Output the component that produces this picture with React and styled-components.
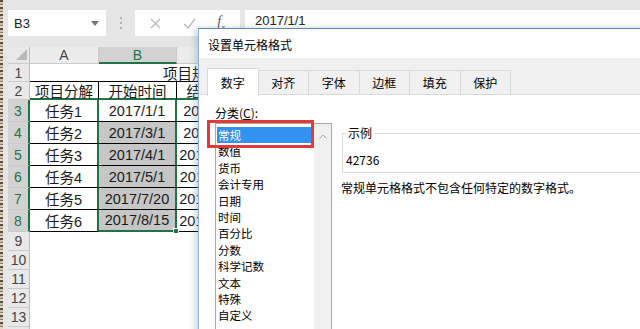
import React from 'react';
import styled, { createGlobalStyle } from 'styled-components';

const Global = createGlobalStyle`
  html, body { margin:0; padding:0; }
  body { width:640px; height:329px; overflow:hidden; background:#e6e6e6; }
  * { box-sizing:border-box; }
`;

const Screen = styled.div`
  position:relative;
  width:640px;
  height:329px;
  overflow:hidden;
  display:flex;
  background:#e6e6e6;
  font-family:"Liberation Sans", "Noto Sans CJK SC", sans-serif;
`;

const Edge = styled.div`
  width:3px;
  flex:none;
  background:repeating-linear-gradient(180deg, #5d4c3c 0 2px, #cbbfae 2px 4px, #8a7763 4px 5px, #e2dbd0 5px 7px);
`;

const Workbook = styled.div`
  flex:1;
  min-width:0;
  display:flex;
  flex-direction:column;
  padding-left:5px;
`;

const Ribbon = styled.div`
  height:10px;
  flex:none;
`;

const FormulaBar = styled.div`
  height:26px;
  flex:none;
  display:flex;
  margin-bottom:11px;
`;

const NameBox = styled.div`
  width:98px;
  background:#fff;
  display:flex;
  align-items:center;
  justify-content:space-between;
  padding:0 7px 0 6px;
  font-size:13px;
  color:#222;
`;

const Dots = styled.div`
  width:29px;
  display:flex;
  flex-direction:column;
  align-items:center;
  justify-content:center;
  gap:3px;
  span { width:2px; height:2px; background:#b0b0b0; }
`;

const FnBox = styled.div`
  width:105px;
  background:#fff;
  display:flex;
  align-items:center;
  justify-content:space-around;
  padding:0 4px;
  margin-right:5px;
`;

const Fx = styled.span`
  font-family:"Liberation Serif", serif;
  font-style:italic;
  font-size:14px;
  color:#555;
  sub { font-size:9px; }
`;

const FormulaInput = styled.div`
  flex:1;
  background:#fff;
  padding:3px 0 0 10px;
  font-size:13px;
  color:#222;
`;

const Sheet = styled.div`
  display:flex;
  flex-direction:column;
  background:#fff;
`;

const Row = styled.div`
  display:flex;
  flex:none;
  height:${p => p.$h}px;
`;

const RowHead = styled.div`
  width:22px;
  flex:none;
  display:flex;
  align-items:center;
  justify-content:center;
  font-size:14px;
  background:${p => (p.$sel ? '#d2d2d2' : '#e9e9e9')};
  color:${p => (p.$sel ? '#217346' : '#444')};
  border-bottom:1px solid #cacaca;
  border-right:${p => (p.$sel ? '2px solid #217346' : '1px solid #bdbdbd')};
`;

const Corner = styled(RowHead)`
  align-items:flex-end;
  justify-content:flex-end;
  padding:0 2px 3px 0;
`;

const ColHead = styled.div`
  width:${p => p.$w}px;
  flex:${p => (p.$w ? 'none' : '1')};
  display:flex;
  align-items:center;
  justify-content:center;
  font-size:14px;
  background:${p => (p.$sel ? '#d2d2d2' : '#ececec')};
  color:${p => (p.$sel ? '#217346' : '#444')};
  border-right:1px solid #cacaca;
  border-bottom:${p => (p.$sel ? '2px solid #217346' : '1px solid #cacaca')};
`;

const Cell = styled.div`
  position:relative;
  width:${p => p.$w}px;
  flex:${p => (p.$w ? 'none' : '1')};
  display:flex;
  align-items:center;
  justify-content:${p => (p.$left ? 'flex-start' : 'center')};
  padding-left:${p => p.$pad || 0}px;
  white-space:nowrap;
  font-size:14.5px;
  color:#1a1a1a;
  background:${p => p.$fill || '#fff'};
  border-right:${p => p.$r || 'none'};
  border-bottom:${p => p.$b || 'none'};
`;

const FillHandle = styled.span`
  position:absolute;
  right:-4px;
  bottom:-4px;
  width:6px;
  height:6px;
  background:#217346;
  border:1px solid #fff;
  z-index:2;
`;

const Dialog = styled.div`
  position:absolute;
  left:198px;
  top:28px;
  width:460px;
  height:320px;
  display:flex;
  flex-direction:column;
  background:#fff;
  border-top:1px solid #5b88b8;
  border-left:1px solid #8fb0d8;
  box-shadow:-3px 0 6px rgba(110, 140, 180, 0.35);
  font-family:"Noto Sans CJK SC", "Liberation Sans", sans-serif;
  font-size:12px;
  color:#000;
`;

const TitleBar = styled.div`
  height:29px;
  flex:none;
  display:flex;
  align-items:center;
  padding:2px 0 0 9px;
`;

const TabBand = styled.div`
  height:36px;
  flex:none;
  display:flex;
  align-items:flex-end;
  padding-left:8px;
  background:#f0f0f0;
`;

const Tab = styled.div`
  position:relative;
  width:51.5px;
  height:${p => (p.$active ? 28 : 24)}px;
  margin:0 -1px ${p => (p.$active ? -2 : 0)}px 0;
  z-index:${p => (p.$active ? 1 : 0)};
  display:flex;
  align-items:center;
  justify-content:center;
  background:${p => (p.$active ? '#fff' : '#f0f0f0')};
  border:1px solid #d9d9d9;
  border-bottom:none;
`;

const Panel = styled.div`
  flex:1;
  padding:10px 0 0 16px;
  border-top:1px solid #d9d9d9;
`;

const Label = styled.div`
  line-height:16px;
  u { text-decoration:underline; }
`;

const Body = styled.div`
  display:flex;
  margin-top:2px;
`;

const ListBox = styled.div`
  position:relative;
  width:117px;
  height:220px;
  display:flex;
  border:1px solid #a9a9a9;
`;

const Items = styled.div`
  flex:1;
  padding:3px 3px 0 1px;
  font-size:11.5px;
`;

const Item = styled.div`
  height:16.4px;
  line-height:16.4px;
  padding-left:1px;
  background:${p => (p.$sel ? '#3392f0' : 'transparent')};
  color:${p => (p.$sel ? '#fff' : '#000')};
`;

const Scroll = styled.div`
  width:17px;
  flex:none;
  background:#f0f0f0;
  display:flex;
  justify-content:center;
  padding-top:10px;
`;

const Mark = styled.div`
  position:absolute;
  left:-9px;
  top:-4px;
  width:107px;
  height:28px;
  border:3px solid #e2393b;
`;

const RightCol = styled.div`
  flex:1;
  margin-left:9px;
`;

const Sample = styled.fieldset`
  margin:3px 0 0 1px;
  padding:0 0 5px 3px;
  border:1px solid #dcdcdc;
  legend { padding:0 2px; line-height:14px; }
  div { margin-top:13px; line-height:14px; }
`;

const Note = styled.div`
  margin-top:8px;
  line-height:14px;
`;

const tasks = [
  ['任务1', '2017/1/1', '2017/2/28'],
  ['任务2', '2017/3/1', '2017/3/31'],
  ['任务3', '2017/4/1', '2017/10/31'],
  ['任务4', '2017/5/1', '2017/11/30'],
  ['任务5', '2017/7/20', '2017/12/15'],
  ['任务6', '2017/8/15', '2017/12/31'],
];

const categories = ['常规', '数值', '货币', '会计专用', '日期', '时间', '百分比', '分数', '科学记数', '文本', '特殊', '自定义'];

const tabs = ['数字', '对齐', '字体', '边框', '填充', '保护'];

const BLACK = '1px solid #000';
const GREEN = '2px solid #217346';

export default function App() {
  return (
    <Screen>
      <Global />
      <Edge />
      <Workbook>
        <Ribbon />
        <FormulaBar>
          <NameBox>
            B3
            <svg width="8" height="5" viewBox="0 0 8 5"><path d="M0 0h8L4 5z" fill="#777" /></svg>
          </NameBox>
          <Dots><span /><span /><span /></Dots>
          <FnBox>
            <svg width="11" height="11" viewBox="0 0 11 11"><path d="M1 1l9 9M10 1l-9 9" stroke="#b8b8b8" strokeWidth="1.3" /></svg>
            <svg width="13" height="11" viewBox="0 0 13 11"><path d="M1 6l4 4 7-9" stroke="#b8b8b8" strokeWidth="1.3" fill="none" /></svg>
            <Fx>f<sub>x</sub></Fx>
          </FnBox>
          <FormulaInput>2017/1/1</FormulaInput>
        </FormulaBar>

        <Sheet>
          <Row $h={17}>
            <Corner>
              <svg width="11" height="11" viewBox="0 0 11 11"><path d="M11 0v11H0z" fill="#b9b9b9" /></svg>
            </Corner>
            <ColHead $w={69}>A</ColHead>
            <ColHead $w={78} $sel>B</ColHead>
            <ColHead $w={78}>C</ColHead>
            <ColHead>D</ColHead>
          </Row>
          <Row $h={18}>
            <RowHead>1</RowHead>
            <Cell $left $pad={133} $b={BLACK}>项目规划进度表</Cell>
          </Row>
          <Row $h={18}>
            <RowHead>2</RowHead>
            <Cell $w={69} $r={BLACK} $b={GREEN}>项目分解</Cell>
            <Cell $w={78} $r={BLACK} $b={GREEN}>开始时间</Cell>
            <Cell $w={78} $r={BLACK} $b={GREEN}>结束时间</Cell>
            <Cell $b={BLACK} />
          </Row>
          {tasks.map(([name, start, end], i) => {
            const last = i === tasks.length - 1;
            return (
              <Row $h={22} key={name}>
                <RowHead $sel>{i + 3}</RowHead>
                <Cell $w={69} $r={GREEN} $b={BLACK}>{name}</Cell>
                <Cell $w={78} $r={GREEN} $b={last ? GREEN : BLACK} $fill={i === 0 ? '#fff' : '#c6c6c6'}>
                  {start}
                  {last && <FillHandle />}
                </Cell>
                <Cell $w={78} $r={BLACK} $b={BLACK}>{end}</Cell>
                <Cell $b={BLACK} />
              </Row>
            );
          })}
          {[9, 10, 11, 12, 13, ''].map(n => (
            <Row $h={19} key={n || 'last'}>
              <RowHead>{n}</RowHead>
              <Cell />
            </Row>
          ))}
        </Sheet>
      </Workbook>

      <Dialog>
        <TitleBar>设置单元格格式</TitleBar>
        <TabBand>
          {tabs.map((t, i) => (
            <Tab key={t} $active={i === 0}>{t}</Tab>
          ))}
        </TabBand>
        <Panel>
          <Label>分类(<u>C</u>):</Label>
          <Body>
            <ListBox>
              <Items>
                {categories.map((c, i) => (
                  <Item key={c} $sel={i === 0}>{c}</Item>
                ))}
              </Items>
              <Scroll>
                <svg width="8" height="5" viewBox="0 0 8 5"><path d="M0.5 4.5L4 1l3.5 3.5" stroke="#a6a6a6" fill="none" /></svg>
              </Scroll>
              <Mark />
            </ListBox>
            <RightCol>
              <Sample>
                <legend>示例</legend>
                <div>42736</div>
              </Sample>
              <Note>常规单元格格式不包含任何特定的数字格式。</Note>
            </RightCol>
          </Body>
        </Panel>
      </Dialog>
    </Screen>
  );
}
